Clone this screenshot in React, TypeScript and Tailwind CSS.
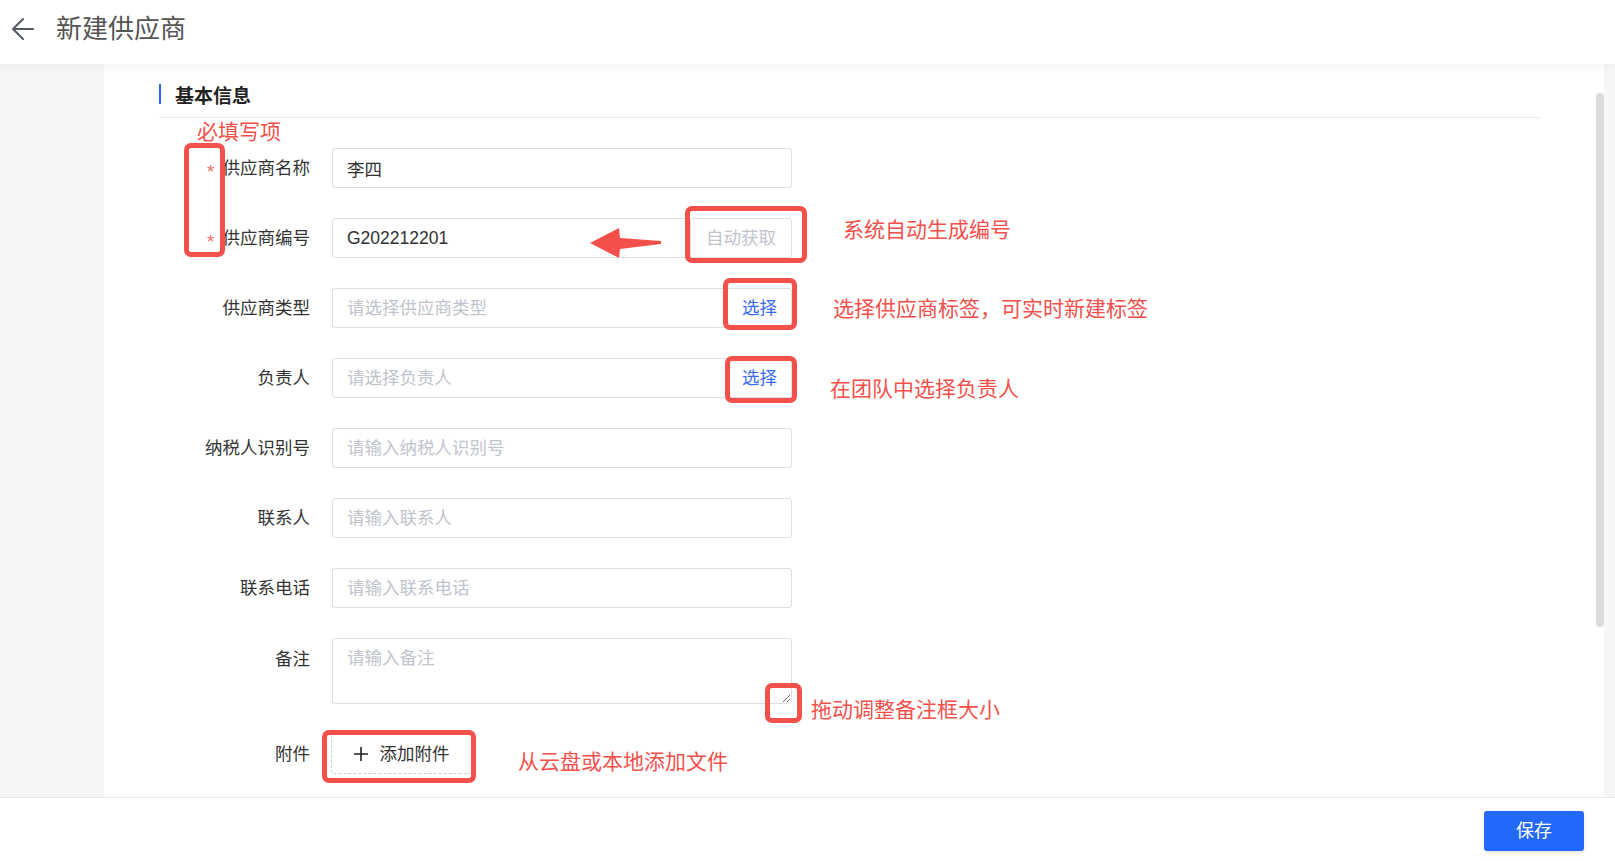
import React from 'react'

// ---------------------------------------------------------------------------
// Form data
// ---------------------------------------------------------------------------

type Row = {
  label: string
  required?: boolean
  value?: string
  placeholder?: string
  action?: 'auto' | 'select'
}

const ROWS: Row[] = [
  { label: '供应商名称', required: true, value: '李四' },
  { label: '供应商编号', required: true, value: 'G202212201', action: 'auto' },
  { label: '供应商类型', placeholder: '请选择供应商类型', action: 'select' },
  { label: '负责人', placeholder: '请选择负责人', action: 'select' },
  { label: '纳税人识别号', placeholder: '请输入纳税人识别号' },
  { label: '联系人', placeholder: '请输入联系人' },
  { label: '联系电话', placeholder: '请输入联系电话' },
]

const inputCls =
  'h-[40px] min-w-0 flex-1 rounded-[3px] border border-[#dcdfe6] bg-white px-[14px] text-[17.5px] text-[#303133] outline-none placeholder:text-[#c0c4cc]'

function Label({ text, required, top }: { text: string; required?: boolean; top?: boolean }) {
  return (
    <div
      className={`flex w-[151px] shrink-0 justify-end text-[17.5px] text-[#333] ${
        top ? 'items-start pt-[8px]' : 'items-center'
      }`}
    >
      {required && <span className="mr-[8px] mt-[6px] text-[19px] leading-none text-[#f56c6c]">*</span>}
      <span>{text}</span>
    </div>
  )
}

function FormRow({ row }: { row: Row }) {
  return (
    <div className="flex h-[40px] items-stretch gap-[22px]">
      <Label text={row.label} required={row.required} />
      <div className="flex w-[460px]">
        <input
          className={inputCls}
          defaultValue={row.value}
          placeholder={row.placeholder}
          readOnly
        />
        {row.action === 'auto' && (
          <button
            type="button"
            className="-ml-px w-[102px] shrink-0 rounded-[3px] border border-[#dcdfe6] bg-white text-[17.5px] text-[#c0c4cc]"
          >
            自动获取
          </button>
        )}
        {row.action === 'select' && (
          <button
            type="button"
            className="-ml-px w-[65px] shrink-0 rounded-r-[3px] border border-[#dcdfe6] bg-white text-[17.5px] text-[#3a6cf0]"
          >
            选择
          </button>
        )}
      </div>
    </div>
  )
}

// ---------------------------------------------------------------------------
// Annotation overlay (red boxes / notes drawn on top of the screenshot)
// ---------------------------------------------------------------------------

function RedBox({ className }: { className: string }) {
  return <div className={`absolute rounded-[7px] border-[5px] border-[#f4504b] ${className}`} />
}

function Note({ className, children }: { className: string; children: React.ReactNode }) {
  return (
    <div className={`absolute whitespace-nowrap text-[21px] leading-none text-[#f4504b] ${className}`}>
      {children}
    </div>
  )
}

function Annotations() {
  return (
    <>
      <Note className="left-[197px] top-[121px]">必填写项</Note>
      <RedBox className="left-[184px] top-[143px] h-[114px] w-[41px]" />

      <svg className="absolute left-[590px] top-[228px]" width="72" height="30" viewBox="0 0 72 30">
        <polygon points="0,15 29,0 30,10 71,13 71,16 30,21 29,30" fill="#f4504b" />
      </svg>
      <RedBox className="left-[685px] top-[206px] h-[57px] w-[122px]" />
      <Note className="left-[843px] top-[219px]">系统自动生成编号</Note>

      <RedBox className="left-[723px] top-[278px] h-[52px] w-[74px]" />
      <Note className="left-[833px] top-[298px]">选择供应商标签，可实时新建标签</Note>

      <RedBox className="left-[725px] top-[356px] h-[47px] w-[72px]" />
      <Note className="left-[830px] top-[378px]">在团队中选择负责人</Note>

      <RedBox className="left-[765px] top-[683px] h-[40px] w-[37px]" />
      <Note className="left-[811px] top-[699px]">拖动调整备注框大小</Note>

      <RedBox className="left-[322px] top-[730px] h-[53px] w-[154px]" />
      <Note className="left-[518px] top-[751px]">从云盘或本地添加文件</Note>
    </>
  )
}

// ---------------------------------------------------------------------------
// Page
// ---------------------------------------------------------------------------

export default function App() {
  return (
    <div className="relative flex h-[861px] w-[1615px] flex-col overflow-hidden bg-white font-['Liberation_Sans','Noto_Sans_CJK_SC',sans-serif]">
      {/* Header */}
      <header className="relative z-10 flex h-[64px] shrink-0 items-center bg-white pb-[6px] pl-[12px] shadow-[0_2px_10px_rgba(0,0,0,0.05)]">
        <svg width="22" height="22" viewBox="0 0 22 22" fill="none" stroke="#555a63" strokeWidth="2" strokeLinecap="round" strokeLinejoin="round">
          <path d="M21 11H1M11 1L1 11l10 10" />
        </svg>
        <h1 className="ml-[22px] text-[26px] font-normal text-[#555]">新建供应商</h1>
      </header>

      {/* Body */}
      <div className="flex min-h-0 flex-1">
        <div className="w-[104px] shrink-0 bg-[#f5f6f8]" />
        <main className="flex min-w-0 flex-1 bg-white">
          <div className="min-w-0 flex-1 overflow-hidden pl-[55px] pr-[56px] pt-[20px]">
            <div className="flex items-start border-b border-[#e8e8e8] pb-[10px]">
              <span className="h-[20px] w-[2px] bg-[#2468f2]" />
              <h2 className="ml-[14px] mt-[3px] text-[19px] font-semibold leading-[20px] text-[#222]">基本信息</h2>
            </div>

            <div className="mt-[30px] flex flex-col gap-[30px]">
              {ROWS.map(r => (
                <FormRow key={r.label} row={r} />
              ))}

              <div className="flex gap-[22px]">
                <Label text="备注" top />
                <textarea
                  className="h-[66px] w-[460px] resize-y rounded-[3px] border border-[#dcdfe6] px-[14px] py-[6px] text-[17.5px] leading-[26px] text-[#303133] outline-none placeholder:text-[#c0c4cc]"
                  placeholder="请输入备注"
                />
              </div>

              <div className="flex h-[40px] gap-[22px]">
                <Label text="附件" />
                <button
                  type="button"
                  className="-ml-px flex h-[40px] w-[141px] items-center justify-center gap-[12px] rounded-[3px] border border-dashed border-[#d0d0d0] bg-white text-[17.5px] text-[#333]"
                >
                  <svg width="14" height="14" viewBox="0 0 14 14" stroke="#222" strokeWidth="1.6">
                    <path d="M7 0v14M0 7h14" />
                  </svg>
                  添加附件
                </button>
              </div>
            </div>
          </div>
          {/* scrollbar */}
          <div className="w-[8px] shrink-0 pt-[29px]">
            <div className="h-[534px] rounded-full bg-[#dcdcdc]" />
          </div>
        </main>
        <div className="w-[11px] shrink-0 bg-[#f5f6f8]" />
      </div>

      {/* Footer */}
      <footer className="flex h-[64px] shrink-0 justify-end border-t border-[#e8e8e8] bg-white pr-[31px] pt-[13px]">
        <button
          type="button"
          className="h-[40px] w-[100px] rounded-[3px] bg-[#2468fa] text-[18px] text-white shadow-[0_2px_4px_rgba(0,0,0,0.1)]"
        >
          保存
        </button>
      </footer>

      <Annotations />
    </div>
  )
}
